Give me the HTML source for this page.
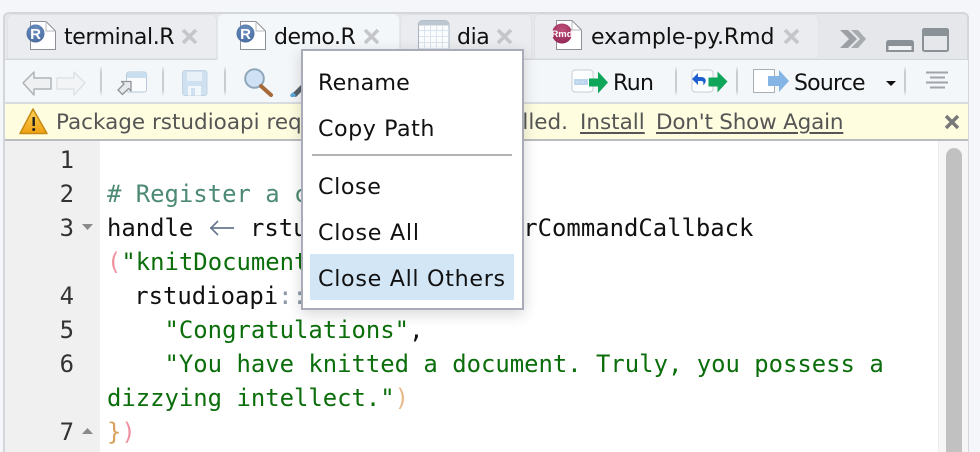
<!DOCTYPE html>
<html><head><meta charset="utf-8">
<style>
html,body{margin:0;padding:0;overflow:hidden;height:452px}
body{width:980px;height:452px;overflow:hidden;position:relative;background:#f4f6f9;font-family:"DejaVu Sans","Liberation Sans",sans-serif;color:#111}
div,span.a,svg.a{position:absolute}
.t{white-space:pre;line-height:34px;height:34px}
.tab{top:14px;height:45px;border-radius:6px 6px 0 0;background:#ebecef;box-shadow:inset 0 0 0 1px #e0e2e5}
.tl{font-size:22px;top:25px;line-height:26px;letter-spacing:-.2px;color:#111;white-space:pre}
.x{top:0}
.sep{top:66px;width:2px;height:30px;background:linear-gradient(#f4f7f9,#c9ccd0 20%,#c9ccd0 80%,#f4f7f9)}
.c{font-family:"DejaVu Sans Mono","Liberation Mono",monospace;font-size:23.9px;white-space:pre;line-height:34px;height:34px;left:107px;color:#111}
.n{font-family:"DejaVu Sans Mono","Liberation Mono",monospace;font-size:23.9px;line-height:34px;height:34px;left:40px;width:34px;text-align:right;color:#333}
.s{color:#0b6e0b}.m{color:#4d8a73}.p{color:#8a98a8}.r{color:#f0919f}.o{color:#d9a05b}
.mi{left:318px;font-size:22.2px;line-height:46px;height:46px;white-space:pre;color:#111}
.y{font-size:21.5px;top:106px;line-height:34px;color:#555;white-space:pre}
.u{text-decoration:underline;text-underline-offset:3px}
</style></head><body>
<!-- pane -->
<div style="left:3px;top:12px;width:966px;height:440px;background:#e5e7ea;border:2px solid #d3d6da;border-bottom:0;border-radius:6px 6px 0 0;box-sizing:border-box"></div>
<div class="tab" style="left:7px;width:210px"></div>
<div class="tab" style="left:218px;width:181px;height:46px;background:#f4f7f9;box-shadow:none"></div>
<div class="tab" style="left:400px;width:132px"></div>
<div class="tab" style="left:534px;width:285px"></div>
<div style="left:5px;top:59px;width:212px;height:1px;background:#d3d6da"></div>
<div style="left:399px;top:59px;width:569px;height:1px;background:#d3d6da"></div>
<div style="left:5px;top:60px;width:963px;height:42px;background:#f4f7f9"></div>
<div style="left:5px;top:102px;width:963px;height:2px;background:#d9dcdf"></div>
<div style="left:5px;top:104px;width:963px;height:35px;background:#fffde0"></div>
<div style="left:5px;top:139px;width:963px;height:2px;background:#b9bcc0"></div>
<div style="left:5px;top:141px;width:963px;height:311px;background:#fff"></div>
<div style="left:5px;top:141px;width:95px;height:311px;background:#f0f0f0"></div>
<div style="left:938px;top:141px;width:30px;height:311px;background:#f6f6f6;border-left:1px solid #ececec;box-sizing:border-box"></div>
<div style="left:946px;top:148px;width:16px;height:304px;background:#c1c1c1;border-radius:8px 8px 0 0"></div>

<!-- tab icons -->
<svg class="a" style="left:0;top:0" width="980" height="60">
 <defs>
  <radialGradient id="rb" cx=".5" cy=".3" r=".8"><stop offset="0" stop-color="#6a8fc0"/><stop offset="1" stop-color="#47699c"/></radialGradient>
  <radialGradient id="rm" cx=".5" cy=".3" r=".8"><stop offset="0" stop-color="#c0507c"/><stop offset="1" stop-color="#8e2250"/></radialGradient>
 </defs>
 <path d="M30.500 21.500H46l9.500 9.500V49.500H30.500Z" fill="#fff" stroke="#8d9096"/><path d="M46 21.500V31h9.500" fill="none" stroke="#b5b8bc"/>
 <circle cx="35.500" cy="33.500" r="9" fill="url(#rb)"/>
 <text x="35.500" y="39" font-family="Liberation Sans" font-weight="700" font-size="15" fill="#fff" text-anchor="middle">R</text>
 <path d="M240.500 21.500H256l9.500 9.500V49.500H240.500Z" fill="#fff" stroke="#8d9096"/><path d="M256 21.500V31h9.500" fill="none" stroke="#b5b8bc"/>
 <circle cx="245.500" cy="33.500" r="9" fill="url(#rb)"/>
 <text x="245.500" y="39" font-family="Liberation Sans" font-weight="700" font-size="15" fill="#fff" text-anchor="middle">R</text>
 <rect x="418.500" y="20.500" width="30.500" height="32" rx="4" fill="#fbfcfe" stroke="#a9b4c0"/>
 <path d="M419 24.500a4 4 0 0 1 4-4h22a4 4 0 0 1 4 4v1h-30Z" fill="#bcc7d2"/>
 <path d="M424.500 26v26M430.500 26v26M436.500 26v26M442.500 26v26M419 30.500h30M419 36.500h30M419 42.500h30M419 48.500h30" stroke="#dbe4ee" fill="none"/>
 <path d="M556.500 20.500H572l9.500 9.500V49.500H556.500Z" fill="#fff" stroke="#8d9096"/><path d="M572 20.500V30h9.500" fill="none" stroke="#b5b8bc"/>
 <circle cx="562" cy="33.500" r="10" fill="url(#rm)"/>
 <text x="562" y="37" font-family="Liberation Sans" font-weight="700" font-size="9.500" fill="#fff" text-anchor="middle">Rmd</text>
 <g stroke="#c4c6c9" stroke-width="3.600" stroke-linecap="butt">
  <path d="M183 30l13 13M196 30l-13 13"/><path d="M365 30l13 13M378 30l-13 13"/><path d="M498 30l13 13M511 30l-13 13"/><path d="M785 30l13 13M798 30l-13 13"/>
 </g>
 <path d="M840 30h8l9 9-9 9h-8l9-9Z" fill="#9c9fa3"/><path d="M851 30h7l8 9-8 9h-7l9-9Z" fill="#a9acaf"/>
 <path d="M886 52v-9q0-3 3-3h22q3 0 3 3v9Z" fill="#8a9297"/><rect x="888.500" y="46" width="23" height="4" fill="#f2f3f4"/>
 <rect x="923" y="29" width="25" height="22" rx="1.500" fill="none" stroke="#8a9297" stroke-width="2"/><path d="M922 36v-5q0-3 3-3h21q3 0 3 3v5Z" fill="#8a9297"/>
</svg>
<div class="tl" style="left:64px;letter-spacing:-.4px">terminal.R</div>
<div class="tl" style="left:274px;letter-spacing:-.5px">demo.R</div>
<div class="tl" style="left:457px;letter-spacing:-.4px">dia</div>
<div class="tl" style="left:591px;letter-spacing:-.05px">example-py.Rmd</div>

<!-- toolbar -->
<div class="sep" style="left:100px"></div><div class="sep" style="left:162px"></div><div class="sep" style="left:224px"></div>
<div class="sep" style="left:675px"></div><div class="sep" style="left:736px"></div><div class="sep" style="left:904px"></div>
<svg class="a" style="left:0;top:60px" width="980" height="44">
 <path d="M23 23l11-11v6h17v11H34v6Z" fill="#eef0f2" stroke="#b0b3b7" stroke-width="1.500" stroke-linejoin="round"/>
 <path d="M85 23L74 12v6H57v11h17v6Z" fill="#f2f4f6" stroke="#dfe2e5" stroke-width="1.500" stroke-linejoin="round"/>
 <rect x="126.500" y="12" width="20" height="20" rx="2.500" fill="#f9fbfd" stroke="#b8c8d8"/>
 <path d="M127 18v-3.500a2.500 2.500 0 0 1 2.500-2.500h14.500a2.500 2.500 0 0 1 2.500 2.500V18Z" fill="#c9dff0"/>
 <path d="M118 30l6-6-2.500-2.500H131V31l-2.500-2.500-6 6Z" fill="#e6e9ec" stroke="#8f9398" stroke-width="1.300" stroke-linejoin="round"/>
 <rect x="182.500" y="10.500" width="24.500" height="25" rx="2.500" fill="#cfe1f0" stroke="#c0d4e6"/>
 <rect x="187" y="12" width="15" height="9" fill="#e8f1f8"/><rect x="188" y="26" width="13" height="9.500" fill="#f2f7fb"/><rect x="191" y="28" width="4" height="7.500" fill="#cfe1f0"/>
 <circle cx="254.500" cy="18.500" r="9.300" fill="#cfe2f5" stroke="#8ea7b8" stroke-width="2"/>
 <path d="M261 26l10 9" stroke="#a5693a" stroke-width="4" stroke-linecap="round"/>
 <path d="M291 35l10-10 4 3-9 9Z" fill="#556068"/><path d="M290 35l3-3 3 3-2 2h-3Z" fill="#5aa7d8"/>
 <rect x="572" y="10" width="21" height="22" rx="3" fill="#fcfdfe" stroke="#c9ced3"/>
 <rect x="574" y="19" width="14" height="6" fill="#bcd6f0"/><path d="M576 22h10" stroke="#d8e8f6" stroke-dasharray="3 2"/>
 <path d="M589 18h9v-7l10 11-10 11v-7h-9Z" fill="#0fa659" transform="translate(0 .5)"/>
 <rect x="692" y="10" width="21" height="22" rx="3" fill="#fcfdfe" stroke="#c9ced3"/>
 <path d="M703 25c4-2 4-8-2-8h-3v-4l-6 6 6 6v-4h3c2 0 3 1 2 4Z" fill="#1f5fd0"/>
 <path d="M709 17h9v-6l10 10-10 11v-6h-9Z" fill="#0fa659" transform="translate(-.5 .5)"/>
 <rect x="753.500" y="9.500" width="21" height="23" fill="#fff" stroke="#a8aeb6"/>
 <path d="M768 16h11v-6l10 11-10 11v-6h-11Z" fill="#84b5e4"/>
 <path d="M886 21h10l-5 5Z" fill="#111"/>
 <path d="M926 12h22M930 17h15M926 22h22M930 27h15" stroke="#a0a5ab" stroke-width="2" fill="none" transform="translate(0 .5)"/>
</svg>
<div class="tl" style="left:613px;top:71px;letter-spacing:-.6px">Run</div>
<div class="tl" style="left:794px;top:71px;letter-spacing:-.8px">Source</div>

<!-- warning bar -->
<svg class="a" style="left:18px;top:107px" width="32" height="29">
 <defs><linearGradient id="w" x1="0" y1="0" x2="0" y2="1"><stop offset="0" stop-color="#fbd45c"/><stop offset="1" stop-color="#f0a010"/></linearGradient></defs>
 <path d="M15 2L2 26.500h27Z" fill="url(#w)" stroke="#c58a12" stroke-width="1.500" stroke-linejoin="round"/>
 <path d="M15.700 10v9" stroke="#222" stroke-width="2.400"/><circle cx="15.700" cy="22.500" r="1.500" fill="#222"/>
</svg>
<div class="y" style="left:56px">Package rstudioapi required but is not </div>
<div class="y" style="right:412px">installed.</div>
<div class="y u" style="left:580px">Install</div>
<div class="y u" style="left:656px;letter-spacing:-.2px">Don't Show Again</div>
<svg class="a" style="left:944px;top:114px" width="16" height="16"><path d="M2 2l12 12M14 2L2 14" stroke="#777" stroke-width="3.500"/></svg>

<!-- gutter -->
<div class="n" style="top:143px">1</div>
<div class="n" style="top:177px">2</div>
<div class="n" style="top:211px">3</div>
<div class="n" style="top:279px">4</div>
<div class="n" style="top:313px">5</div>
<div class="n" style="top:347px">6</div>
<div class="n" style="top:415px">7</div>
<svg class="a" style="left:80px;top:220px" width="16" height="220"><path d="M2 4h11l-5.500 6Z" fill="#8a8a8a"/><path d="M2 214h11l-5.500-6Z" fill="#8a8a8a"/></svg>

<!-- code -->
<div class="c m" style="top:177px"># Register a command callback</div>
<div class="c" style="top:211px">handle</div>
<svg class="a" style="left:209px;top:219px" width="26" height="18"><path d="M1 9h24M9 2L2 9l7 7" fill="none" stroke="#68788f" stroke-width="1.700"/></svg>
<div class="c" style="top:211px;left:250px">rstudioapi::registerCommandCallback</div>
<div class="c" style="top:245px"><span class="r">(</span><span class="s">"knitDocument"</span></div>
<div class="c" style="top:279px;left:105.500px">  rstudioapi<span class="p">::</span>showDialog(</div>
<div class="c s" style="top:313px">    "Congratulations"<span style="color:#111">,</span></div>
<div class="c s" style="top:347px">    "You have knitted a document. Truly, you possess a</div>
<div class="c s" style="top:381px">dizzying intellect."<span class="r" style="color:#e9b98a">)</span></div>
<div class="c" style="top:415px"><span class="o">}</span><span class="r">)</span></div>

<!-- menu -->
<div style="left:301px;top:49px;width:223px;height:261px;box-sizing:border-box;background:#fff;border:2px solid #a9acb8;box-shadow:0 4px 14px rgba(0,0,0,.16)"></div>
<div style="left:312px;top:154px;width:200px;height:2px;background:#b2b2b2"></div>
<div style="left:310px;top:254px;width:204px;height:46px;background:#d3e6f6"></div>
<div class="mi" style="top:60px;letter-spacing:.15px">Rename</div>
<div class="mi" style="top:106px;letter-spacing:.55px">Copy Path</div>
<div class="mi" style="top:164px;letter-spacing:.6px">Close</div>
<div class="mi" style="top:210px;letter-spacing:.75px">Close All</div>
<div class="mi" style="top:256px;letter-spacing:.7px">Close All Others</div>
</body></html>
